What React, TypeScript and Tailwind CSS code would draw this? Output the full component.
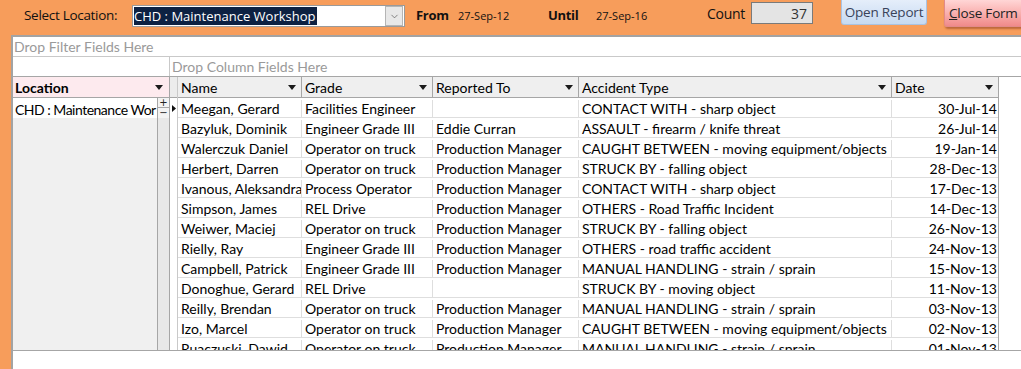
import { ChevronDown } from "lucide-react";

type Row = {
  name: string;
  grade: string;
  reportedTo: string;
  accident: string;
  date: string;
};

const rows: Row[] = [
  { name: "Meegan, Gerard", grade: "Facilities Engineer", reportedTo: "", accident: "CONTACT WITH - sharp object", date: "30-Jul-14" },
  { name: "Bazyluk, Dominik", grade: "Engineer Grade III", reportedTo: "Eddie Curran", accident: "ASSAULT - firearm / knife threat", date: "26-Jul-14" },
  { name: "Walerczuk Daniel", grade: "Operator on truck", reportedTo: "Production Manager", accident: "CAUGHT BETWEEN - moving equipment/objects", date: "19-Jan-14" },
  { name: "Herbert, Darren", grade: "Operator on truck", reportedTo: "Production Manager", accident: "STRUCK BY - falling object", date: "28-Dec-13" },
  { name: "Ivanous, Aleksandra", grade: "Process Operator", reportedTo: "Production Manager", accident: "CONTACT WITH - sharp object", date: "17-Dec-13" },
  { name: "Simpson, James", grade: "REL Drive", reportedTo: "Production Manager", accident: "OTHERS - Road Traffic Incident", date: "14-Dec-13" },
  { name: "Weiwer, Maciej", grade: "Operator on truck", reportedTo: "Production Manager", accident: "STRUCK BY - falling object", date: "26-Nov-13" },
  { name: "Rielly, Ray", grade: "Engineer Grade III", reportedTo: "Production Manager", accident: "OTHERS - road traffic accident", date: "24-Nov-13" },
  { name: "Campbell, Patrick", grade: "Engineer Grade III", reportedTo: "Production Manager", accident: "MANUAL HANDLING - strain / sprain", date: "15-Nov-13" },
  { name: "Donoghue, Gerard", grade: "REL Drive", reportedTo: "", accident: "STRUCK BY - moving object", date: "11-Nov-13" },
  { name: "Reilly, Brendan", grade: "Operator on truck", reportedTo: "Production Manager", accident: "MANUAL HANDLING - strain / sprain", date: "03-Nov-13" },
  { name: "Izo, Marcel", grade: "Operator on truck", reportedTo: "Production Manager", accident: "CAUGHT BETWEEN - moving equipment/objects", date: "02-Nov-13" },
  { name: "Ruaczuski, Dawid", grade: "Operator on truck", reportedTo: "Production Manager", accident: "MANUAL HANDLING - strain / sprain", date: "01-Nov-13" },
];

function SortArrow() {
  return (
    <svg width="8" height="5" viewBox="0 0 8 5" className="shrink-0">
      <path d="M0 0h8L4 5z" fill="#1a1a1a" />
    </svg>
  );
}

function HeaderCell({ label, width }: { label: string; width: string }) {
  return (
    <div
      className={`${width} flex h-full shrink-0 items-center justify-between border-r border-[#a6a6a6] pl-[3px] pr-[5px] pt-[1px]`}
    >
      <span>{label}</span>
      <SortArrow />
    </div>
  );
}

export default function App() {
  return (
    <div className="flex h-[369px] w-[1021px] flex-col overflow-hidden bg-[#f79d5b] font-['Lato',sans-serif] text-[14px] text-black">
      {/* form header */}
      <div className="flex h-[35px] shrink-0 items-start whitespace-nowrap font-['Open_Sans',sans-serif] text-[13.5px] text-[#111]">
        <span className="ml-[24px] mt-[5px] w-[95px] shrink-0 tracking-[-0.3px]">Select Location:</span>
        <div className="ml-[13px] mt-[5px] flex h-[22px] w-[273px] shrink-0 items-center border border-[#9a9a9a] bg-white pl-[1px] pr-[1px]">
          <span className="flex h-[18px] items-center bg-[#0d2142] pr-[2px] text-[13px] leading-none text-white">
            CHD : Maintenance Workshop
          </span>
          <div className="ml-auto flex h-[20px] w-[18px] items-center justify-center border border-[#b5b5b5] bg-[#e8e8e8]">
            <ChevronDown size={11} strokeWidth={1.5} color="#555" />
          </div>
        </div>
        <span className="ml-[11px] mt-[6px] w-[31px] shrink-0 text-[13px] font-bold tracking-[-0.3px]">From</span>
        <span className="ml-[11px] mt-[8px] w-[90px] shrink-0 text-[11px]">27-Sep-12</span>
        <span className="mt-[6px] w-[48px] shrink-0 text-[13px] font-bold tracking-[-0.3px]">Until</span>
        <span className="mt-[8px] w-[111px] shrink-0 text-[11px]">27-Sep-16</span>
        <span className="mt-[3px] w-[44px] shrink-0 text-[14px] tracking-[-0.3px]">Count</span>
        <div className="mt-[2px] flex h-[22px] w-[62px] shrink-0 items-center justify-end border border-[#7a7a7a] bg-[#e4e4e4] pr-[5px] text-[14px] text-[#333]">
          37
        </div>
        <button
          type="button"
          className="ml-[28px] flex h-[25px] w-[86px] shrink-0 items-center justify-center rounded-b-[3px] border border-t-0 border-[#a9c3e3] bg-gradient-to-b from-[#e5eefa] to-[#c7daf2] text-[13.5px] tracking-[-0.2px] text-[#39425a]"
        >
          Open Report
        </button>
        <button
          type="button"
          className="ml-[17px] flex h-[27px] w-[90px] shrink-0 items-center justify-start rounded-bl-[3px] border border-t-0 border-[#e28a8a] bg-gradient-to-b from-[#ffd6d6] to-[#f08a8a] pl-[4px] text-[13.5px] tracking-[-0.2px] text-[#222] shadow-[1px_2px_2px_rgba(120,40,20,0.45)]"
        >
          <span className="underline">C</span>lose Form
        </button>
      </div>

      {/* pivot grid */}
      <div className="flex min-h-0 flex-1 pl-[11px]">
        <div className="flex min-h-0 flex-1 flex-col border-l-2 border-t-2 border-[#a3a3a3] bg-white">
          <div className="flex h-[20px] shrink-0 items-center border-b border-[#c9c9c9] pl-[1px] text-[#9a9a9a]">
            Drop Filter Fields Here
          </div>
          <div className="flex h-[20px] shrink-0 border-b border-[#a6a6a6]">
            <div className="w-[157px] shrink-0 border-r border-[#c9c9c9]" />
            <div className="flex items-center pl-[2px] text-[#9a9a9a]">
              Drop Column Fields Here
            </div>
          </div>

          <div className="flex h-[274px] shrink-0 overflow-hidden border-b border-[#a6a6a6]">
            {/* row fields */}
            <div className="flex w-[157px] shrink-0 flex-col border-r border-[#a6a6a6]">
              <div className="flex h-[21px] shrink-0 items-center justify-between border-b border-[#a6a6a6] bg-[#fdeaee] pl-[2px] pr-[6px] pt-[1px] font-bold">
                <span>Location</span>
                <SortArrow />
              </div>
              <div className="flex h-[20px] shrink-0 bg-white">
                <div className="flex w-[145px] items-center overflow-hidden whitespace-nowrap pl-[2px] pt-[2px] tracking-[-0.5px]">
                  CHD : Maintenance Wor
                </div>
                <div className="flex w-[12px] flex-col border-l border-[#a6a6a6] bg-[#f3f3f3] font-['DejaVu_Sans',sans-serif] text-[10px] leading-none text-[#222]">
                  <div className="flex h-[10px] items-center justify-center border-b border-[#a6a6a6]">+</div>
                  <div className="flex h-[10px] items-center justify-center">−</div>
                </div>
              </div>
              <div className="flex flex-1">
                <div className="w-[145px] bg-[#f0f0f0]" />
                <div className="w-[12px] border-l border-[#a6a6a6] bg-[#e8e8e8]" />
              </div>
            </div>

            {/* record selector */}
            <div className="flex w-[8px] shrink-0 flex-col border-r border-[#c9c9c9]">
              <div className="h-[21px] shrink-0 border-b border-[#a6a6a6] bg-[#ececec]" />
              <div className="flex h-[20px] items-center justify-center">
                <svg width="4" height="7" viewBox="0 0 4 7">
                  <path d="M0 0l4 3.5L0 7z" fill="#111" />
                </svg>
              </div>
            </div>

            {/* data */}
            <div className="flex w-[821px] shrink-0 flex-col border-r border-[#a6a6a6]">
              <div className="flex h-[21px] shrink-0 border-b border-[#a6a6a6] bg-[#efefef]">
                <HeaderCell label="Name" width="w-[124px]" />
                <HeaderCell label="Grade" width="w-[131px]" />
                <HeaderCell label="Reported To" width="w-[146px]" />
                <HeaderCell label="Accident Type" width="w-[313px]" />
                <HeaderCell label="Date" width="w-[107px]" />
              </div>
              {rows.map((r) => (
                <div key={r.name} className="flex h-[20px] shrink-0 whitespace-nowrap border-b border-[#dedede] pt-[2px]">
                  <div className="flex w-[124px] shrink-0 items-center overflow-hidden border-r border-[#dedede] pl-[3px]">{r.name}</div>
                  <div className="flex w-[131px] shrink-0 items-center overflow-hidden border-r border-[#dedede] pl-[3px]">{r.grade}</div>
                  <div className="flex w-[146px] shrink-0 items-center overflow-hidden border-r border-[#dedede] pl-[3px]">{r.reportedTo}</div>
                  <div className="flex w-[313px] shrink-0 items-center overflow-hidden border-r border-[#dedede] pl-[3px]">{r.accident}</div>
                  <div className="flex w-[107px] shrink-0 items-center justify-end overflow-hidden pr-[2px]">{r.date}</div>
                </div>
              ))}
            </div>
          </div>
          <div className="flex-1 bg-white" />
        </div>
      </div>
    </div>
  );
}
